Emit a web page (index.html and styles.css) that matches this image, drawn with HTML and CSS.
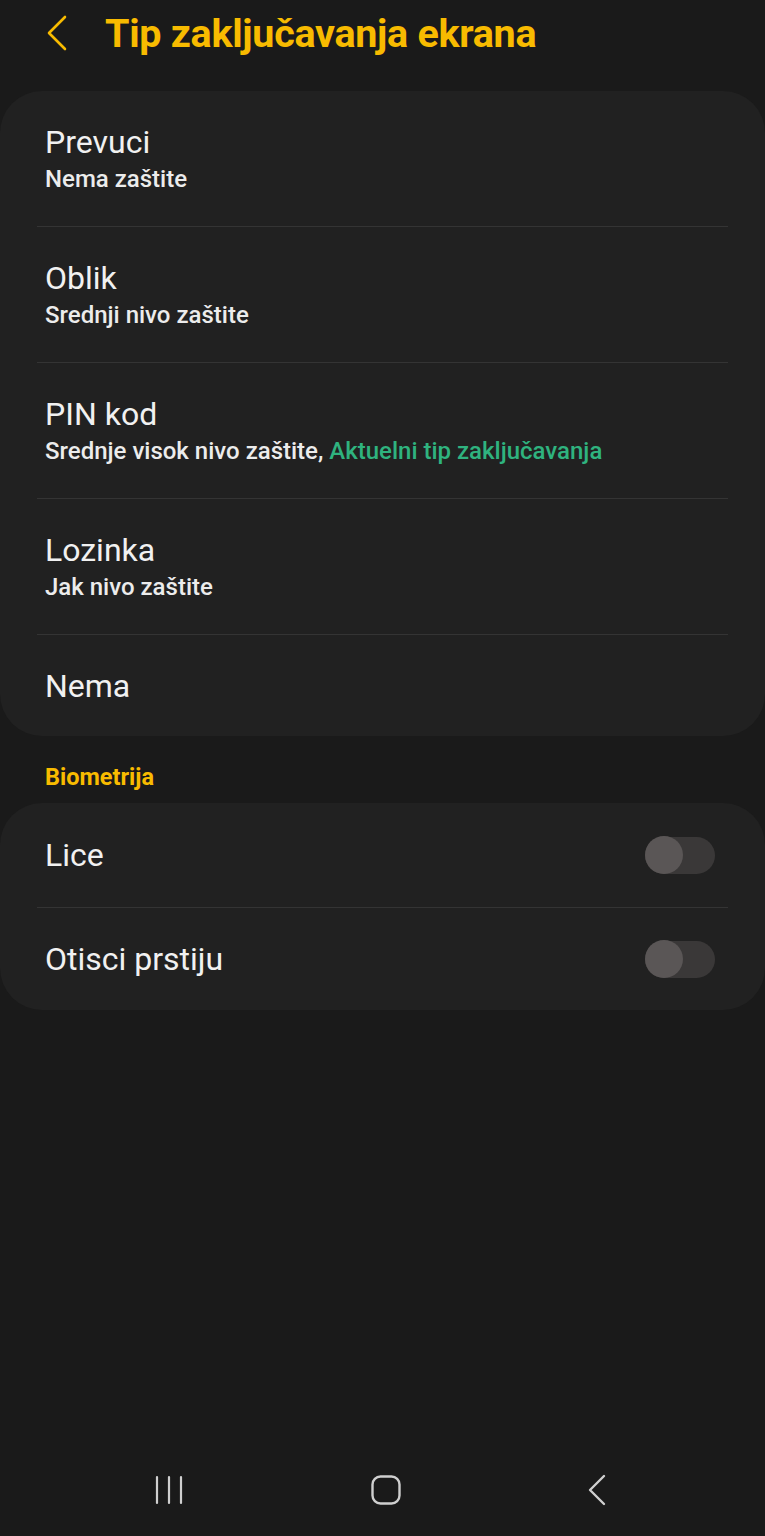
FILE: index.html
```html
<!DOCTYPE html>
<html lang="sr">
<head>
<meta charset="utf-8">
<title>Tip zaključavanja ekrana</title>
<link rel="stylesheet" href="styles.css">
</head>
<body>
<div class="screen">
  <header class="topbar">
    <svg class="back" width="24" height="36" viewBox="0 0 24 36"><path d="M20 2 L4 18 L20 34" fill="none" stroke="#f8bb00" stroke-width="2.6" stroke-linecap="round" stroke-linejoin="round"/></svg>
    <h1 class="title">Tip zaključavanja ekrana</h1>
  </header>

  <section class="card">
    <div class="row">
      <div class="row-title">Prevuci</div>
      <div class="row-sub">Nema zaštite</div>
    </div>
    <div class="divider"></div>
    <div class="row">
      <div class="row-title">Oblik</div>
      <div class="row-sub">Srednji nivo zaštite</div>
    </div>
    <div class="divider"></div>
    <div class="row">
      <div class="row-title">PIN kod</div>
      <div class="row-sub">Srednje visok nivo zaštite, <span class="accent">Aktuelni tip zaključavanja</span></div>
    </div>
    <div class="divider"></div>
    <div class="row">
      <div class="row-title">Lozinka</div>
      <div class="row-sub">Jak nivo zaštite</div>
    </div>
    <div class="divider"></div>
    <div class="row row-last">
      <div class="row-title">Nema</div>
    </div>
  </section>

  <div class="section-label">Biometrija</div>

  <section class="card">
    <div class="row row-toggle">
      <div class="row-title">Lice</div>
      <div class="switch"><span class="knob"></span></div>
    </div>
    <div class="divider"></div>
    <div class="row row-toggle row-toggle-last">
      <div class="row-title">Otisci prstiju</div>
      <div class="switch"><span class="knob"></span></div>
    </div>
  </section>

  <nav class="navbar">
    <svg width="30" height="30" viewBox="0 0 30 30"><path d="M3 2 V28 M15 2 V28 M27 2 V28" stroke="#cfcfcf" stroke-width="2.2" stroke-linecap="round"/></svg>
    <svg width="30" height="30" viewBox="0 0 30 30"><rect x="1.5" y="1.5" width="27" height="27" rx="8" fill="none" stroke="#cfcfcf" stroke-width="2.4"/></svg>
    <svg width="20" height="32" viewBox="0 0 20 32"><path d="M17 2 L3 16 L17 30" fill="none" stroke="#cfcfcf" stroke-width="2.4" stroke-linecap="round" stroke-linejoin="round"/></svg>
  </nav>
</div>
</body>
</html>
```

FILE: styles.css
```css
* { box-sizing: border-box; }
html, body {
  margin: 0;
  padding: 0;
  background: #1a1a1a;
}
body {
  font-family: Roboto, "Noto Sans", "DejaVu Sans", sans-serif;
  color: #f2f2f2;
}
.screen {
  width: 765px;
  height: 1536px;
  display: flex;
  flex-direction: column;
}
.topbar {
  height: 91px;
  display: flex;
  align-items: flex-start;
  padding: 14px 0 0 45px;
  gap: 36px;
}
.back { margin-top: 1px; }
.title {
  margin: 0;
  font-size: 39.5px;
  font-weight: 700;
  color: #f8bb00;
  line-height: 40px;
  letter-spacing: -0.3px;
}
.card {
  background: #212121;
  border-radius: 42px;
}
.row {
  height: 135px;
  padding-left: 45px;
  display: flex;
  flex-direction: column;
  justify-content: center;
}
.row-last { height: 101px; }
.row-title {
  font-size: 32px;
  line-height: 36px;
  font-weight: 400;
  color: #f1f1f1;
}
.row-sub {
  font-size: 24px;
  line-height: 28px;
  font-weight: 500;
  color: #ececec;
  margin-top: 5px;
}
.accent { color: #2fb37f; }
.divider {
  height: 1px;
  background: #343434;
  margin: 0 37px;
}
.section-label {
  height: 67px;
  padding: 27px 0 0 45px;
  font-size: 23.5px;
  line-height: 28px;
  font-weight: 700;
  color: #f8bb00;
}
.row-toggle {
  height: 104px;
  flex-direction: row;
  align-items: center;
  justify-content: space-between;
  padding-right: 50px;
}
.row-toggle-last { height: 102px; }
.switch {
  position: relative;
  width: 70px;
  height: 37px;
  border-radius: 19px;
  background: #3a3838;
}
.knob {
  position: absolute;
  left: 0;
  top: -0.5px;
  width: 38px;
  height: 38px;
  border-radius: 50%;
  background: #5a5656;
}
.navbar {
  margin-top: auto;
  height: 92px;
  display: flex;
  align-items: center;
  justify-content: space-between;
  padding: 0 158px 0 154px;
}
```
